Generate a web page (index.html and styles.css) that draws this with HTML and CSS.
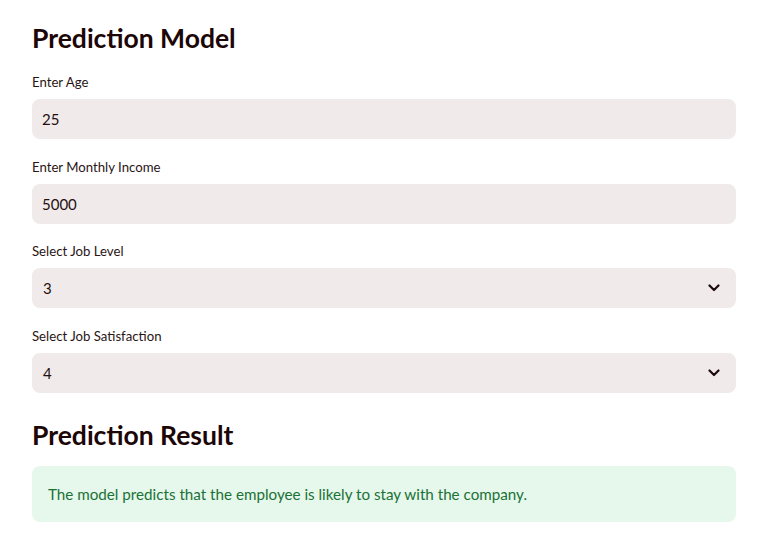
FILE: index.html
```html
<!DOCTYPE html>
<html lang="en">
<head>
<meta charset="utf-8">
<title>Prediction Model</title>
<link rel="stylesheet" href="styles.css">
</head>
<body>
<main class="page">
  <h2 class="title">Prediction Model</h2>

  <div class="field">
    <label class="label">Enter Age</label>
    <div class="input">25</div>
  </div>

  <div class="field">
    <label class="label">Enter Monthly Income</label>
    <div class="input">5000</div>
  </div>

  <div class="field">
    <label class="label">Select Job Level</label>
    <div class="input select">
      <span class="value">3</span>
      <svg class="chev" width="12" height="8" viewBox="0 0 12 8"><path d="M1.5 1.5 L6 6 L10.5 1.5" fill="none" stroke="#1e0b0b" stroke-width="2.2" stroke-linecap="round" stroke-linejoin="round"/></svg>
    </div>
  </div>

  <div class="field">
    <label class="label">Select Job Satisfaction</label>
    <div class="input select">
      <span class="value">4</span>
      <svg class="chev" width="12" height="8" viewBox="0 0 12 8"><path d="M1.5 1.5 L6 6 L10.5 1.5" fill="none" stroke="#1e0b0b" stroke-width="2.2" stroke-linecap="round" stroke-linejoin="round"/></svg>
    </div>
  </div>

  <h2 class="title result-title">Prediction Result</h2>

  <div class="alert">The model predicts that the employee is likely to stay with the company.</div>
</main>
</body>
</html>
```
FILE: styles.css
```css
html, body {
  margin: 0;
  padding: 0;
  background: #ffffff;
}

body {
  font-family: "Source Sans Pro", Lato, "Noto Sans", sans-serif;
  color: #241010;
}

.page {
  width: 704px;
  padding: 18px 0 0 32px;
  display: flex;
  flex-direction: column;
}

.title {
  margin: 0;
  font-size: 26.5px;
  line-height: 40px;
  font-weight: 700;
  color: #1c0606;
}

.field {
  display: flex;
  flex-direction: column;
  margin-top: 14px;
}

.field + .field {
  margin-top: 17.5px;
}

.label {
  font-size: 13.2px;
  line-height: 20px;
  margin-bottom: 7px;
  color: #2a1515;
}

.input {
  height: 40px;
  box-sizing: border-box;
  background: #f0eaea;
  border-radius: 8px;
  padding: 0 10px;
  display: flex;
  align-items: center;
  font-size: 15px;
  color: #241010;
}

.select {
  justify-content: space-between;
  padding: 0 16px 0 11px;
}

.chev {
  display: block;
}

.result-title {
  margin-top: 22px;
}

.alert {
  margin-top: 11.5px;
  background: #e6f8ec;
  border-radius: 8px;
  padding: 16px 16px;
  font-size: 15.2px;
  line-height: 24px;
  color: #1b7136;
}
```
